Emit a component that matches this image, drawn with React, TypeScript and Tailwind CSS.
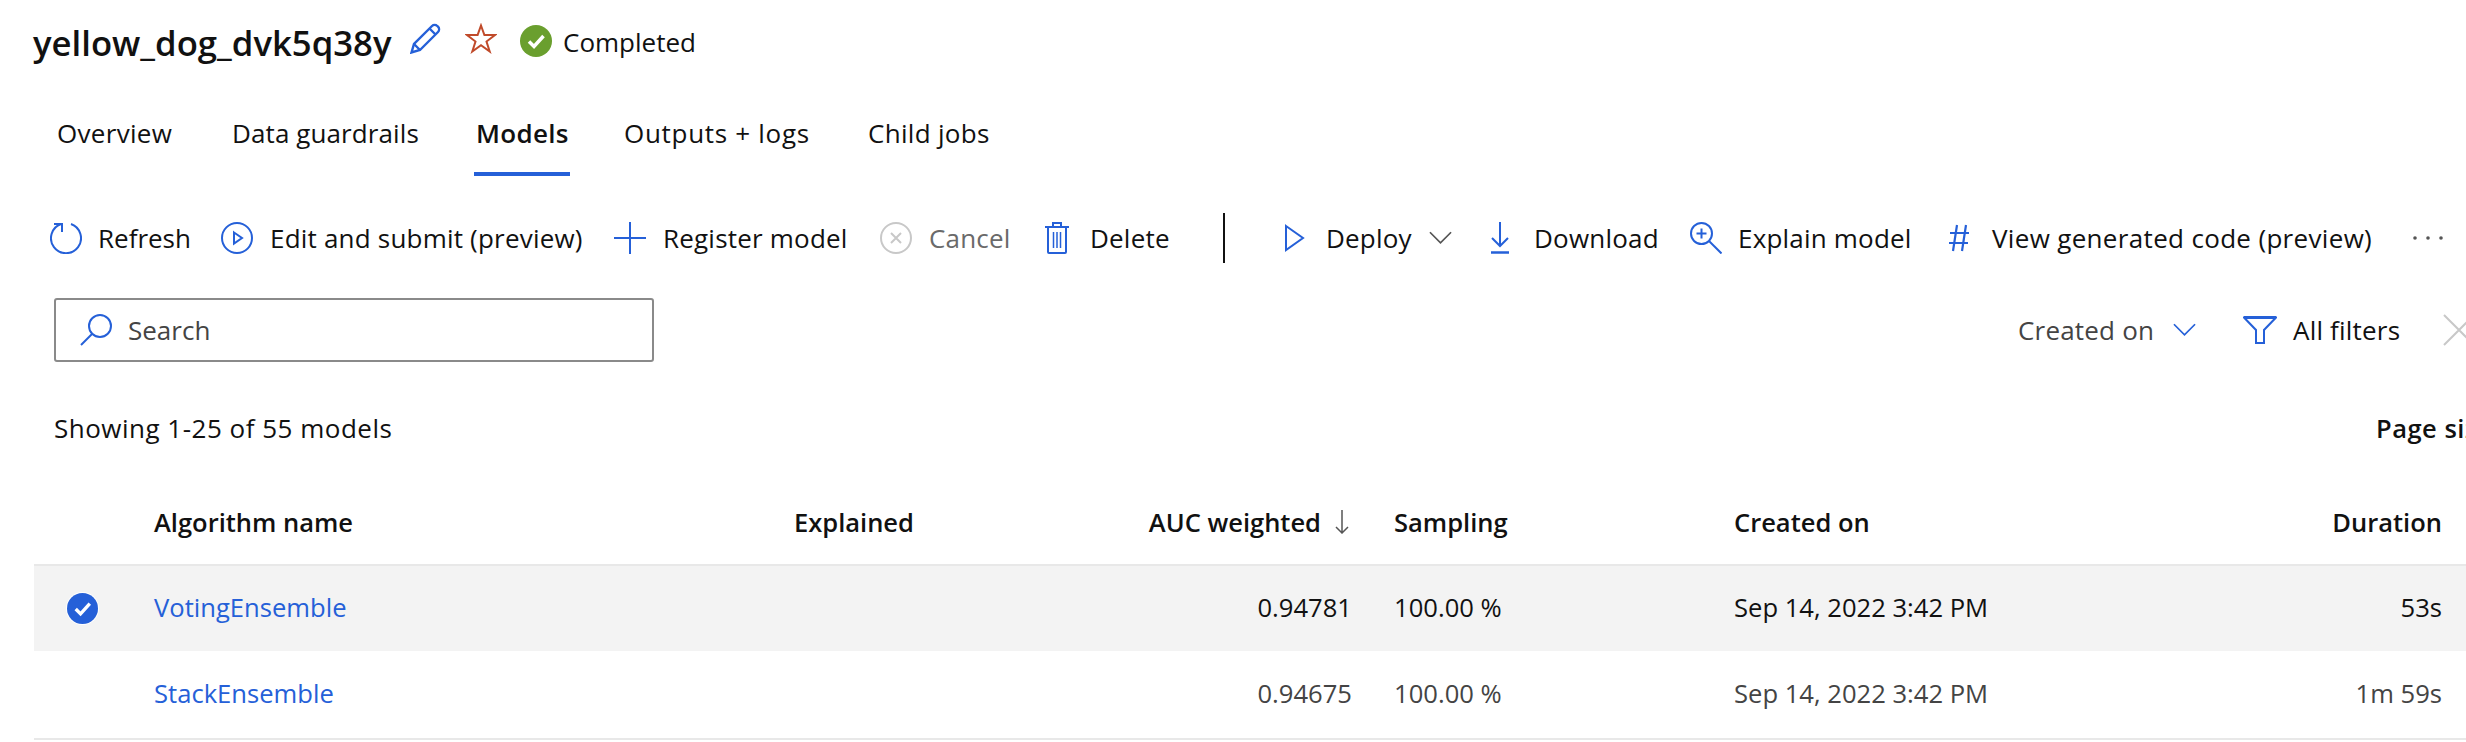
import React from 'react';

const blue = '#2560d8';

const Pencil = () => (
  <svg width="32" height="32" viewBox="0 0 32 32" fill="none" stroke={blue} strokeWidth="2.400">
    <path d="M1.500 30.500l2.500-8.500L22 4a3.800 3.800 0 015.300 0l.7.7a3.800 3.800 0 010 5.300L10 28z" />
    <path d="M19.500 6.500l6 6M4 22l6 6" />
  </svg>
);

const Star = () => (
  <svg width="32" height="31" viewBox="0 0 32 31" fill="none" stroke="#c04a2a" strokeWidth="2">
    <path d="M16 2.500l3.400 9.500H30l-8.500 6.500 3.200 10-8.700-6.200-8.700 6.200 3.200-10L2 12h10.600z" />
  </svg>
);

const CheckCircle = ({ color, size }: { color: string; size: number }) => (
  <svg width={size} height={size} viewBox="0 0 32 32">
    <circle cx="16" cy="16" r="16" fill={color} />
    <path d="M9 16.500l5 5L23.500 11" fill="none" stroke="#fff" strokeWidth="3.500" />
  </svg>
);

const Refresh = () => (
  <svg width="32" height="32" viewBox="0 0 32 32" fill="none" stroke={blue} strokeWidth="2">
    <path d="M21 2A15 15 0 1 1 11 2" />
    <path d="M4 2h8v8" />
  </svg>
);

const PlayCircle = () => (
  <svg width="32" height="32" viewBox="0 0 32 32" fill="none" stroke={blue} strokeWidth="2">
    <circle cx="16" cy="16" r="15" />
    <path d="M13 10.500l8 5.500-8 5.500z" />
  </svg>
);

const Plus = () => (
  <svg width="32" height="32" viewBox="0 0 32 32" fill="none" stroke={blue} strokeWidth="2">
    <path d="M16 0v32M0 16h32" />
  </svg>
);

const CancelIcon = () => (
  <svg width="32" height="32" viewBox="0 0 32 32" fill="none" stroke="#c8c8c8" strokeWidth="2">
    <circle cx="16" cy="16" r="15" />
    <path d="M11 11l10 10M21 11L11 21" />
  </svg>
);

const Trash = () => (
  <svg width="26" height="32" viewBox="0 0 26 32" fill="none" stroke={blue} strokeWidth="2">
    <path d="M1 5h24M4 5v25a1 1 0 001 1h16a1 1 0 001-1V5M9 5V1h8v4" />
    <path d="M9.500 10v16M13 10v16M16.500 10v16" strokeWidth="1.500" />
  </svg>
);

const DeployIcon = () => (
  <svg width="20" height="28" viewBox="0 0 20 28" fill="none" stroke={blue} strokeWidth="2">
    <path d="M1 2l17 12L1 26z" />
  </svg>
);

const Chevron = ({ color, width }: { color: string; width: number }) => (
  <svg width={width} height="14" viewBox="0 0 24 14" fill="none" stroke={color} strokeWidth="1.800">
    <path d="M1 1l11 11L23 1" />
  </svg>
);

const DownloadIcon = () => (
  <svg width="20" height="32" viewBox="0 0 20 32" fill="none" stroke={blue} strokeWidth="2">
    <path d="M10 0v24M2 16l8 8 8-8" />
    <path d="M1 30.500h18" strokeWidth="2.500" />
  </svg>
);

const ExplainIcon = () => (
  <svg width="32" height="32" viewBox="0 0 32 32" fill="none" stroke={blue} strokeWidth="2">
    <circle cx="11.500" cy="11.500" r="10.500" />
    <path d="M19 19l12.500 12.500" />
    <path d="M11.500 6.500v10M6.500 11.500h10" />
  </svg>
);

const Hash = () => (
  <svg width="24" height="28" viewBox="0 0 24 28" fill="none" stroke={blue} strokeWidth="2.200">
    <path d="M10 1L6 27M19 1l-4 26M3 9h19M2 19h19" />
  </svg>
);

const Dots = () => (
  <svg width="32" height="6" viewBox="0 0 32 6" fill="#555">
    <circle cx="3" cy="3" r="1.800" />
    <circle cx="16" cy="3" r="1.800" />
    <circle cx="29" cy="3" r="1.800" />
  </svg>
);

const SearchIcon = () => (
  <svg width="32" height="32" viewBox="0 0 32 32" fill="none" stroke={blue} strokeWidth="2">
    <circle cx="20" cy="12" r="11" />
    <path d="M12 20L1 31" />
  </svg>
);

const Filter = () => (
  <svg width="34" height="28" viewBox="0 0 34 28" fill="none" stroke={blue} strokeWidth="2">
    <path d="M1 1.500h32L21 14v13h-8V14z" />
    <path d="M1 1.500h32" strokeWidth="3" />
  </svg>
);

const ToolButton = ({ icon, label, className, disabled }: { icon: React.ReactNode; label: string; className: string; disabled?: boolean }) => (
  <button className={`flex items-center shrink-0 whitespace-nowrap ${className} ${disabled ? 'text-[#6a6a6a]' : 'text-[#111]'}`}>
    {icon}
    <span>{label}</span>
  </button>
);

const rows = [
  { name: 'VotingEnsemble', auc: '0.94781', duration: '53s', selected: true },
  { name: 'StackEnsemble', auc: '0.94675', duration: '1m 59s', selected: false },
];

const tabs = [
  { label: 'Overview', cls: 'w-[175px] tracking-[0.3px]' },
  { label: 'Data guardrails', cls: 'w-[244px] tracking-[0.1px]' },
  { label: 'Models', cls: 'w-[96px] -ml-[2px] pl-[2px] mr-[54px] tracking-[0.3px] font-semibold' },
  { label: 'Outputs + logs', cls: 'w-[244px] tracking-[0.7px]' },
  { label: 'Child jobs', cls: 'tracking-[0.3px]' },
];

export default function App() {
  return (
    <div className="w-[2466px] h-[742px] overflow-hidden bg-white text-[#111] text-[26px] font-['Open_Sans',sans-serif]">
      {/* Title */}
      <div className="h-[86px] pl-[33px] flex items-center">
        <h1 className="text-[34.700px] font-semibold w-[377px] shrink-0 whitespace-nowrap">yellow_dog_dvk5q38y</h1>
        <span className="-mt-[11px]"><Pencil /></span>
        <span className="ml-[23px] -mt-[10px]"><Star /></span>
        <span className="ml-[23px] -mt-[4px]"><CheckCircle color="#6a9f2e" size={32} /></span>
        <span className="ml-[11px] -mt-[1px]">Completed</span>
      </div>

      {/* Tabs */}
      <div className="h-[92px] pl-[57px] flex items-stretch">
        {tabs.map(tab => (
          <div key={tab.label} className={`relative flex items-center pt-[3px] whitespace-nowrap ${tab.cls}`}>
            {tab.label}
            {tab.label === 'Models' && <div className="absolute left-0 right-0 bottom-[2px] h-[4px] bg-[#2560d8]" />}
          </div>
        ))}
      </div>

      {/* Toolbar */}
      <div className="h-[120px] pl-[50px] flex items-center tracking-[0.2px]">
        <ToolButton icon={<Refresh />} label="Refresh" className="gap-[16px] w-[171px] tracking-normal" />
        <ToolButton icon={<PlayCircle />} label="Edit and submit (preview)" className="gap-[17px] w-[393px]" />
        <ToolButton icon={<Plus />} label="Register model" className="gap-[17px] w-[266px]" />
        <ToolButton icon={<CancelIcon />} label="Cancel" className="gap-[17px] w-[164px]" disabled />
        <ToolButton icon={<Trash />} label="Delete" className="gap-[20px] w-[179px]" />
        <div className="w-[2px] h-[50px] bg-[#111] shrink-0" />
        <ToolButton icon={<DeployIcon />} label="Deploy" className="gap-[21px] w-[144px] ml-[60px]" />
        <span className="shrink-0"><Chevron color="#555" width={23} /></span>
        <ToolButton icon={<DownloadIcon />} label="Download" className="gap-[24px] w-[200px] ml-[38px]" />
        <ToolButton icon={<ExplainIcon />} label="Explain model" className="gap-[16px] w-[257px]" />
        <ToolButton icon={<Hash />} label="View generated code (preview)" className="gap-[21px] w-[465px] tracking-[0.33px]" />
        <span className="shrink-0"><Dots /></span>
      </div>

      {/* Search and filters */}
      <div className="h-[64px] pl-[54px] flex items-center">
        <div className="w-[600px] h-[64px] border-2 border-[#8a8a8a] rounded-[3px] pl-[24px] flex items-center gap-[16px] text-[#444] shrink-0">
          <SearchIcon />
          <span>Search</span>
        </div>
        <span className="ml-[1364px] w-[155px] text-[#444] shrink-0 whitespace-nowrap tracking-[0.2px]">Created on</span>
        <span className="shrink-0"><Chevron color={blue} width={23} /></span>
        <span className="ml-[47px] shrink-0"><Filter /></span>
        <span className="ml-[16px] w-[150px] shrink-0 whitespace-nowrap tracking-[0.2px]">All filters</span>
        <svg className="shrink-0" width="32" height="32" viewBox="0 0 32 32" fill="none" stroke="#c8c8c8" strokeWidth="2">
          <path d="M1 1l30 30M31 1L1 31" />
        </svg>
      </div>

      {/* Count */}
      <div className="h-[132px] pl-[54px] flex items-center justify-between whitespace-nowrap">
        <span className="tracking-[0.5px]">Showing 1-25 of 55 models</span>
        <span className="font-semibold text-[25.500px] tracking-[0.5px] w-[90px] overflow-hidden">Page size</span>
      </div>

      {/* Table */}
      <div className="ml-[34px] w-[2432px]">
        <div className="h-[72px] pb-[14px] grid grid-cols-[120px_640px_200px_358px_42px_340px_416px_292px] items-center text-[25.500px] font-semibold border-b-2 border-[#e8e8e8]">
          <span />
          <span>Algorithm name</span>
          <span>Explained</span>
          <span className="flex items-center justify-end gap-[14px] pr-[3px]">
            AUC weighted
            <svg width="14" height="24" viewBox="0 0 14 24" fill="none" stroke="#555" strokeWidth="1.500">
              <path d="M7 0v23M1 17l6 6 6-6" />
            </svg>
          </span>
          <span />
          <span>Sampling</span>
          <span>Created on</span>
          <span className="text-right">Duration</span>
        </div>
        {rows.map(row => (
          <div key={row.name} className={`grid grid-cols-[120px_640px_200px_358px_42px_340px_416px_292px] items-center text-[25.600px] ${row.selected ? 'h-[85px] bg-[#f3f3f3]' : 'h-[89px] text-[#444] border-b-2 border-[#e8e8e8]'}`}>
            <span className="pl-[33px] flex">
              {row.selected && (
                <span className="flex rounded-full ring-1 ring-white">
                  <CheckCircle color={blue} size={31} />
                </span>
              )}
            </span>
            <a className="text-[#2560d8]">{row.name}</a>
            <span />
            <span className="text-right">{row.auc}</span>
            <span />
            <span>100.00 %</span>
            <span>Sep 14, 2022 3:42 PM</span>
            <span className="text-right">{row.duration}</span>
          </div>
        ))}
      </div>
    </div>
  );
}
